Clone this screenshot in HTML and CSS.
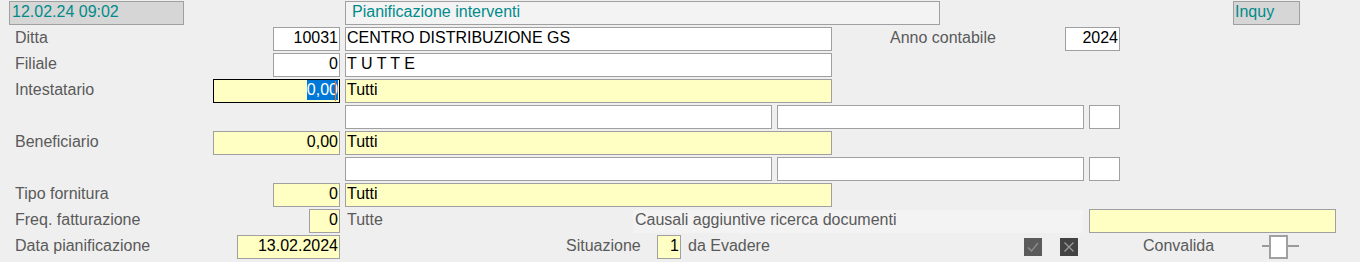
FILE: index.html
```html
<!DOCTYPE html>
<html lang="it">
<head>
    <meta charset="UTF-8">
    <meta name="viewport" content="width=device-width, initial-scale=1.0">
    <title>Pianificazione interventi</title>
    <link rel="stylesheet" href="styles.css">
</head>
<body>
    <div class="form">
        <div class="row">
            <div class="head head-date">12.02.24 09:02</div>
            <div class="head head-title">Pianificazione interventi</div>
            <div class="head head-mode">Inquy</div>
        </div>

        <div class="row">
            <span class="lbl to-273">Ditta</span>
            <div class="fld num w-67">10031</div>
            <div class="fld w-487 ml-5">CENTRO DISTRIBUZIONE GS</div>
            <span class="lbl-free anno">Anno contabile</span>
            <div class="fld num w-55">2024</div>
        </div>

        <div class="row">
            <span class="lbl to-273">Filiale</span>
            <div class="fld num w-67">0</div>
            <div class="fld w-487 ml-5">T U T T E</div>
        </div>

        <div class="row">
            <span class="lbl to-213">Intestatario</span>
            <div class="fld num w-127 yellow focus"><span class="sel">0,00</span><span class="caret"></span></div>
            <div class="fld w-487 ml-5 yellow">Tutti</div>
        </div>

        <div class="row">
            <div class="fld w-427 ml-345"></div>
            <div class="fld w-307 ml-5"></div>
            <div class="fld w-31 ml-5"></div>
        </div>

        <div class="row">
            <span class="lbl to-213">Beneficiario</span>
            <div class="fld num w-127 yellow">0,00</div>
            <div class="fld w-487 ml-5 yellow">Tutti</div>
        </div>

        <div class="row">
            <div class="fld w-427 ml-345"></div>
            <div class="fld w-307 ml-5"></div>
            <div class="fld w-31 ml-5"></div>
        </div>

        <div class="row">
            <span class="lbl to-273">Tipo fornitura</span>
            <div class="fld num w-67 yellow">0</div>
            <div class="fld w-487 ml-5 yellow">Tutti</div>
        </div>

        <div class="row">
            <span class="lbl to-309">Freq. fatturazione</span>
            <div class="fld num w-31 yellow">0</div>
            <span class="lbl-free tutte">Tutte</span>
            <span class="causali">Causali aggiuntive ricerca documenti</span>
            <div class="fld w-247 ml-6 yellow"></div>
        </div>

        <div class="row">
            <span class="lbl to-237">Data pianificazione</span>
            <div class="fld num w-103 yellow">13.02.2024</div>
            <span class="lbl-free situazione">Situazione</span>
            <div class="fld num w-24 yellow">1</div>
            <span class="lbl-free evadere">da Evadere</span>
            <span class="icon-btn btn-ok">
                <svg width="18" height="18" viewBox="0 0 18 18"><path d="M4 9.5 L7.5 13 L14 5" fill="none" stroke="#8e8e8e" stroke-width="1.3"/></svg>
            </span>
            <span class="icon-btn btn-no">
                <svg width="18" height="18" viewBox="0 0 18 18"><path d="M4.5 4.5 L13.5 13.5 M13.5 4.5 L4.5 13.5" fill="none" stroke="#9a9a9a" stroke-width="1.3"/></svg>
            </span>
            <span class="lbl-free convalida">Convalida</span>
            <span class="toggle"><span class="toggle-box"></span></span>
        </div>
    </div>
</body>
</html>
```

FILE: styles.css
```css
body {
    margin: 0;
    background-color: #efefef;
    font-family: "Liberation Sans", Arial, sans-serif;
    font-size: 16px;
    color: #000;
}

.form {
    padding-top: 1px;
    width: 1360px;
}

.row {
    display: flex;
    align-items: flex-start;
    height: 24px;
    margin-bottom: 2px;
}

/* header boxes */
.head {
    box-sizing: border-box;
    height: 24px;
    border: 1px solid #a0a0a0;
    color: #008b8b;
    line-height: 19px;
    white-space: nowrap;
}

.head-date {
    margin-left: 9px;
    width: 175px;
    padding-left: 2px;
    background-color: #d6d6d6;
}

.head-title {
    margin-left: 161px;
    width: 595px;
    padding-left: 6px;
    background-color: #f3f3f3;
}

.head-mode {
    margin-left: 293px;
    width: 67px;
    padding-left: 1px;
    background-color: #d6d6d6;
}

/* labels */
.lbl, .lbl-free {
    box-sizing: border-box;
    height: 24px;
    line-height: 22px;
    color: #5a5a5a;
    white-space: nowrap;
}

.lbl {
    padding-left: 15px;
}

.to-213 { width: 213px; }
.to-237 { width: 237px; }
.to-273 { width: 273px; }
.to-309 { width: 309px; }

.anno {
    margin-left: 58px;
    width: 175px;
}

.tutte {
    margin-left: 5px;
    width: 288px;
    padding-left: 2px;
}

.situazione {
    margin-left: 226px;
    width: 91px;
}

.evadere {
    margin-left: 7px;
    width: 336px;
}

.convalida {
    margin-left: 65px;
    width: 119px;
}

.causali {
    box-sizing: border-box;
    width: 450px;
    height: 23px;
    margin-top: 1px;
    padding-left: 2px;
    line-height: 20px;
    color: #5a5a5a;
    background-color: #f3f3f3;
    white-space: nowrap;
}

/* fields */
.fld {
    box-sizing: border-box;
    height: 24px;
    border: 1px solid #a0a0a0;
    background-color: #fff;
    line-height: 20px;
    padding: 0 1px;
    white-space: nowrap;
    overflow: hidden;
}

.num {
    text-align: right;
}

.yellow {
    background-color: #ffffc3;
}

.focus {
    border-color: #000;
    position: relative;
}

.sel {
    background-color: #0078d7;
    color: #fff;
    padding: 1px 0 2px;
}

.caret {
    position: absolute;
    right: 3px;
    top: 1px;
    width: 1px;
    height: 20px;
    background-color: #e0701c;
}

.w-24 { width: 24px; }
.w-31 { width: 31px; }
.w-55 { width: 55px; }
.w-67 { width: 67px; }
.w-103 { width: 103px; }
.w-127 { width: 127px; }
.w-247 { width: 247px; }
.w-307 { width: 307px; }
.w-427 { width: 427px; }
.w-487 { width: 487px; }

.ml-5 { margin-left: 5px; }
.ml-6 { margin-left: 6px; }
.ml-345 { margin-left: 345px; }

/* action icons */
.icon-btn {
    display: block;
    width: 18px;
    height: 18px;
    margin-top: 3px;
}

.icon-btn svg {
    display: block;
}

.btn-ok {
    background-color: #5b5b5b;
}

.btn-no {
    margin-left: 18px;
    background-color: #434343;
}

/* convalida switch */
.toggle {
    display: flex;
    align-items: center;
    width: 37px;
    height: 24px;
    background: linear-gradient(#9a9a9a, #9a9a9a) no-repeat 0 10px / 37px 2px;
}

.toggle-box {
    box-sizing: border-box;
    width: 19px;
    height: 24px;
    margin-left: 7px;
    border: 2px solid #a0a0a0;
    background-color: #fff;
}
```
